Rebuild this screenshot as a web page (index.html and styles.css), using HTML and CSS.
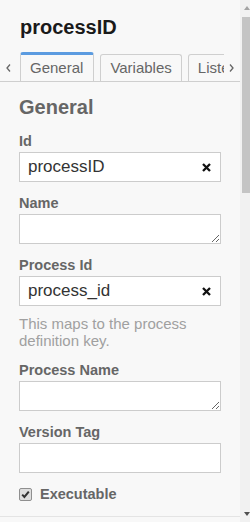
FILE: index.html
```html
<!DOCTYPE html>
<html lang="en">
<head>
<meta charset="utf-8">
<title>processID</title>
<link rel="stylesheet" href="styles.css">
</head>
<body>
<div class="app">
  <div class="panel">
    <h1 class="title">processID</h1>
    <div class="tabbar">
      <span class="tab-arrow">
        <svg width="5" height="8" viewBox="0 0 5 8"><polyline points="4,0.5 1,4 4,7.5" fill="none" stroke="#666" stroke-width="1.3"/></svg>
      </span>
      <div class="tabs">
        <span class="tab active">General</span>
        <span class="tab">Variables</span>
        <span class="tab">Listeners</span>
      </div>
      <span class="tab-arrow right">
        <svg width="5" height="8" viewBox="0 0 5 8"><polyline points="1,0.5 4,4 1,7.5" fill="none" stroke="#666" stroke-width="1.3"/></svg>
      </span>
    </div>
    <div class="content">
      <h2 class="group">General</h2>
      <div class="field">
        <label class="label">Id</label>
        <div class="input">
          <span class="value">processID</span>
          <span class="clear"><svg width="9" height="9" viewBox="0 0 9 9"><path d="M1 1L8 8M8 1L1 8" stroke="#111" stroke-width="2.3" stroke-linecap="butt"/></svg></span>
        </div>
      </div>
      <div class="field">
        <label class="label">Name</label>
        <textarea class="area"></textarea>
      </div>
      <div class="field">
        <label class="label">Process Id</label>
        <div class="input">
          <span class="value">process_id</span>
          <span class="clear"><svg width="9" height="9" viewBox="0 0 9 9"><path d="M1 1L8 8M8 1L1 8" stroke="#111" stroke-width="2.3" stroke-linecap="butt"/></svg></span>
        </div>
        <div class="help">This maps to the process definition key.</div>
      </div>
      <div class="field">
        <label class="label">Process Name</label>
        <textarea class="area"></textarea>
      </div>
      <div class="field">
        <label class="label">Version Tag</label>
        <div class="input"></div>
      </div>
      <div class="check-row">
        <span class="check"><svg width="11" height="11" viewBox="0 0 11 11"><path d="M2.2 5.6L4.4 8L8.8 2.6" fill="none" stroke="#333" stroke-width="2"/></svg></span>
        <span class="check-label">Executable</span>
      </div>
    </div>
  </div>
  <div class="scrollbar">
    <span class="sb-up"></span>
    <span class="sb-thumb"></span>
    <span class="sb-space"></span>
    <span class="sb-down"></span>
  </div>
</div>
</body>
</html>
```
FILE: styles.css
```css
* { box-sizing: border-box; }
html, body { margin: 0; padding: 0; }
body {
  background: #f8f8f8;
  font-family: "Liberation Sans", Arial, sans-serif;
  width: 250px;
  height: 522px;
  overflow: hidden;
}
.app {
  display: flex;
  width: 250px;
  height: 522px;
}
.panel {
  width: 240px;
  height: 517px;
  border-bottom: 1px solid #e4e4e4;
  overflow: hidden;
  padding-top: 15px;
}
.title {
  margin: 0;
  padding-left: 20px;
  font-size: 20px;
  line-height: 24px;
  font-weight: bold;
  color: #1a1a1a;
}
.tabbar {
  margin-top: 12px;
  display: flex;
  align-items: flex-end;
  border-bottom: 1px solid #cfcfcf;
  height: 31px;
}
.tab-arrow {
  width: 20px;
  display: flex;
  justify-content: center;
  padding-bottom: 9px;
  padding-left: 0;
}
.tab-arrow:first-child { justify-content: flex-start; padding-left: 6px; }
.tab-arrow.right { width: 16px; justify-content: flex-start; padding-left: 5px; }
.tabs {
  display: flex;
  align-items: flex-end;
  gap: 6px;
  width: 204px;
  overflow: hidden;
  height: 31px;
  flex: none;
}
.tab {
  flex: none;
  font-size: 15px;
  line-height: 17px;
  color: #666;
  border: 1px solid #cfcfcf;
  border-bottom: none;
  border-radius: 3px 3px 0 0;
  padding: 4px 9px 5px;
  background: #f8f8f8;
  white-space: nowrap;
}
.tab.active {
  border-top: 3px solid #5b9be0;
  padding: 4px 10px 6px 9px;
  margin-bottom: -1px;
  position: relative;
}
.content {
  padding: 13px 0 0 19px;
}
.group {
  margin: 0 0 13px;
  font-size: 20px;
  line-height: 24px;
  font-weight: bold;
  color: #666;
}
.field {
  margin-bottom: 12px;
}
.label {
  display: block;
  font-size: 14.5px;
  line-height: 18px;
  font-weight: bold;
  color: #666;
  margin-bottom: 2px;
}
.input {
  display: flex;
  align-items: center;
  width: 202px;
  height: 30px;
  border: 1px solid #cccccc;
  background: #fff;
  padding: 0 9px 0 8px;
}
.value {
  flex: 1;
  font-size: 17px;
  color: #333;
  line-height: 20px;
}
.clear {
  display: flex;
  width: 9px;
  height: 9px;
}
.area {
  display: block;
  width: 202px;
  height: 30px;
  margin: 0;
  border: 1px solid #cccccc;
  background: #fff;
  font-family: "Liberation Sans", Arial, sans-serif;
  font-size: 17px;
  padding: 0;
  border-radius: 0;
  outline: none;
}
.help {
  margin-top: 9px;
  font-size: 15px;
  line-height: 17px;
  color: #a0a0a0;
  width: 200px;
}
.check-row {
  display: flex;
  align-items: center;
  margin-top: 7px;
  height: 18px;
}
.check {
  width: 13px;
  height: 13px;
  border: 1px solid #8f8f8f;
  border-radius: 2px;
  background: #dedede;
  display: flex;
  align-items: center;
  justify-content: center;
  margin-right: 8px;
}
.check-label {
  font-size: 14.5px;
  line-height: 18px;
  font-weight: bold;
  color: #666;
}
.scrollbar {
  width: 10px;
  height: 522px;
  background: #f1f1f1;
  display: flex;
  flex-direction: column;
  align-items: flex-end;
}
.sb-up {
  width: 7px;
  height: 17px;
  display: block;
  position: relative;
}
.sb-up::before {
  content: "";
  position: absolute;
  left: 1px;
  top: 6px;
  border-left: 3px solid transparent;
  border-right: 3px solid transparent;
  border-bottom: 4px solid #a3a3a3;
}
.sb-thumb {
  width: 8px;
  height: 176px;
  background: #c4c4c4;
  display: block;
}
.sb-space { flex: 1; }
.sb-down {
  width: 7px;
  height: 17px;
  display: block;
  position: relative;
}
.sb-down::before {
  content: "";
  position: absolute;
  left: 1px;
  top: 7px;
  border-left: 3px solid transparent;
  border-right: 3px solid transparent;
  border-top: 4px solid #505050;
}
```
